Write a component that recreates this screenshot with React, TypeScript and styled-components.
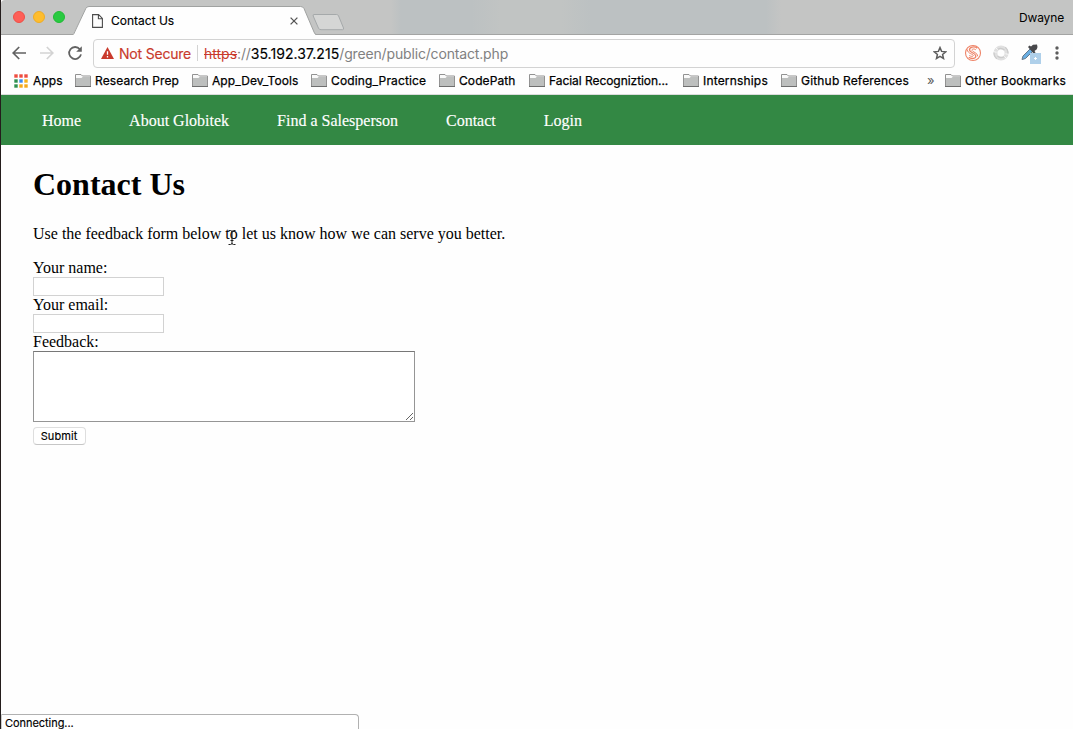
import React from "react";
import styled, { createGlobalStyle } from "styled-components";

const Global = createGlobalStyle`
  * { box-sizing: border-box; }
  html, body { margin: 0; padding: 0; overflow: hidden; }
  body { background: #fdfdfd; }
`;

const ui = `"Inter", "Roboto", sans-serif`;
const serif = `"Liberation Serif", "Times New Roman", serif`;

const Window = styled.div`
  position: relative;
  display: flex;
  flex-direction: column;
  width: 1073px;
  height: 729px;
  background: #fefefe;
  border-left: 1px solid #241d1c;
  overflow: hidden;
  font-family: ${ui};
  color: #000;
`;

const TitleBar = styled.header`
  display: flex;
  flex: none;
  height: 35px;
  background: linear-gradient(90deg, #c4c5c4 0 390px, #bcc1c2 400px 470px, #c1c4c3 500px 560px, #bcc1c2 590px 765px, #c4c5c4 780px);
  border-bottom: 1px solid #a3a4a3;
  border-top-left-radius: 4px;
`;

const Lights = styled.div`
  display: flex;
  gap: 8px;
  width: 72px;
  padding: 11px 0 0 12px;
`;

const Light = styled.span<{ $fill: string; $edge: string }>`
  width: 12px;
  height: 12px;
  border-radius: 50%;
  background: ${(p) => p.$fill};
  border: 1px solid ${(p) => p.$edge};
`;

const Tab = styled.div`
  position: relative;
  display: flex;
  width: 243px;
  height: 35px;
  flex: none;
`;

const TabShape = styled.svg`
  position: absolute;
  inset: 0;
`;

const TabContent = styled.div`
  position: relative;
  display: flex;
  align-items: center;
  width: 100%;
  height: 28px;
  margin-top: 7px;
  padding: 0 18px 0 19px;
`;

const TabTitle = styled.span`
  margin-left: 8px;
  flex: 1;
  font-size: 12px;
  line-height: 16px;
  letter-spacing: 0;
  -webkit-text-stroke: 0.15px #000;
`;

const NewTab = styled.svg`
  margin: 12px 0 0 -6px;
  flex: none;
`;

const User = styled.span`
  margin: 10px 9px 0 auto;
  font-size: 12px;
  line-height: 16px;
  letter-spacing: -0.15px;
`;

const Toolbar = styled.div`
  display: flex;
  align-items: center;
  flex: none;
  height: 33px;
  padding-top: 3px;
`;

const NavButtons = styled.div`
  display: flex;
  gap: 12px;
  width: 92px;
  padding-left: 10px;
`;

const AddressBar = styled.div`
  display: flex;
  align-items: center;
  width: 862px;
  height: 29px;
  padding: 0 7px;
  border: 1px solid #d3d3d3;
  border-radius: 4px;
  font-size: 14px;
  line-height: 20px;
`;

const Warning = styled.span`
  width: 72px;
  margin-left: 5px;
  padding-top: 1px;
  color: #c93a2c;
  white-space: nowrap;
  letter-spacing: -0.2px;
  -webkit-text-stroke: 0.15px #c93a2c;
`;

const Divider = styled.i`
  width: 1px;
  height: 16px;
  margin: 0 6px;
  background: #d3d3d3;
`;

const Url = styled.span`
  flex: 1;
  padding-top: 1px;
  white-space: nowrap;
  color: #818181;
  letter-spacing: -0.16px;
`;

const Scheme = styled.s`
  color: #c93a2c;
  letter-spacing: 0;
`;

const Host = styled.span`
  color: #000;
  letter-spacing: 0.06px;
  -webkit-text-stroke: 0.15px #000;
`;

const Extensions = styled.div`
  display: flex;
  align-items: center;
  gap: 8px;
  padding-left: 8px;
`;

const Kebab = styled.svg`
  margin-left: 6px;
`;

const Bookmarks = styled.nav`
  display: flex;
  flex: none;
  align-items: center;
  height: 27px;
  border-bottom: 1px solid #dcdcdc;
  padding: 0 0 1px 13px;
`;

const Bookmark = styled.span<{ $width: number; $spacing?: number; $gap?: number }>`
  display: flex;
  align-items: center;
  flex: none;
  gap: ${(p) => p.$gap ?? 4}px;
  width: ${(p) => p.$width}px;
  font-size: 12px;
  line-height: 16px;
  letter-spacing: ${(p) => p.$spacing ?? 0}px;
  white-space: nowrap;
  -webkit-text-stroke: 0.25px #000;
`;

const Overflow = styled.span`
  width: 18px;
  color: #5c5c5c;
  font-size: 13px;
  line-height: 14px;
  padding-bottom: 2px;
`;

const SiteNav = styled.nav`
  display: flex;
  align-items: center;
  flex: none;
  gap: 48px;
  height: 50px;
  padding: 2px 41px 0;
  background: #338844;
  font: 16px/18px ${serif};
`;

const NavLink = styled.a`
  color: #fff;
  -webkit-text-stroke: 0.15px #fff;
`;

const Main = styled.main`
  display: flex;
  flex-direction: column;
  align-items: flex-start;
  padding: 21px 32px;
  font: 16px/18px ${serif};
`;

const Heading = styled.h1`
  margin: 0;
  font-size: 32px;
  line-height: 37px;
`;

const Intro = styled.p`
  position: relative;
  margin: 22px 0 16px;
`;

const Caret = styled.svg`
  position: absolute;
  left: 195px;
  top: 5px;
`;

const Form = styled.form`
  display: flex;
  flex-direction: column;
  align-items: flex-start;
`;

const Label = styled.label`
  height: 18px;
`;

const Input = styled.input`
  width: 131px;
  height: 19px;
  padding: 1px;
  border: 1px solid #d2d2d2;
  border-radius: 0;
  background: #fff;
`;

const Area = styled.textarea`
  width: 382px;
  height: 71px;
  border: 1px solid #959595;
  border-top-color: #777;
  border-radius: 0;
  background: #fff;
`;

const Submit = styled.button`
  width: 53px;
  height: 18px;
  margin-top: 5px;
  padding: 0 1px 0 0;
  border: 1px solid #dedede;
  border-bottom-color: #c6c6c6;
  border-radius: 4px;
  background: #fff;
  font: 11px/14px ${ui};
  letter-spacing: 0.08px;
  color: #000;
  -webkit-text-stroke: 0.15px #000;
`;

const Status = styled.div`
  position: absolute;
  left: 0;
  bottom: 0;
  width: 358px;
  height: 15px;
  padding: 1px 0 0 3px;
  border: 1px solid #b1b1b1;
  border-bottom: 0;
  border-left-color: #ccc;
  border-top-right-radius: 4px;
  background: #fff;
  font-size: 11px;
  line-height: 15px;
  letter-spacing: -0.05px;
  -webkit-text-stroke: 0.15px #000;
`;

const Folder = () => (
  <svg width="16" height="13" viewBox="0 0 16 13">
    <path d="M.5 12.5V.5h5.500l1.500 1.500h8v10.500z" fill="#fafafa" stroke="#929292" />
    <path d="M1 4h5.500l1-1H15v9H1z" fill="#bdbfbe" />
    <path d="M0 12.500h16" stroke="#6e6e6e" />
  </svg>
);

const appColors = ["#ee4d3f", "#ee4d3f", "#ee4d3f", "#2f9150", "#3c8af0", "#f5b21a", "#2f9150", "#f5a91a", "#f5a91a"];

const AppsIcon = () => (
  <svg width="14" height="14" viewBox="0 0 14 14">
    {appColors.map((c, i) => (
      <rect key={i} x={(i % 3) * 5 + 0.3} y={Math.floor(i / 3) * 5 + 0.3} width="3.400" height="3.400" fill={c} />
    ))}
  </svg>
);

const bookmarks = [
  { name: "Research Prep", width: 117, spacing: 0.1 },
  { name: "App_Dev_Tools", width: 119, spacing: 0.08 },
  { name: "Coding_Practice", width: 128, spacing: 0.15 },
  { name: "CodePath", width: 90, spacing: 0.1 },
  { name: "Facial Recogniztion...", width: 154, spacing: -0.05 },
  { name: "Internships", width: 98, spacing: 0.18 },
  { name: "Github References", width: 146, spacing: 0.18 },
];

export default function App() {
  return (
    <Window>
      <Global />
      <TitleBar>
        <Lights>
          <Light $fill="#fe5f57" $edge="#ed5047" />
          <Light $fill="#febd2e" $edge="#eeac25" />
          <Light $fill="#29ca41" $edge="#20bb35" />
        </Lights>
        <Tab>
          <TabShape width="243" height="35">
            <path d="M0 35L12.8 8.5Q13.8 6.5 16 6.5H227.5Q230 6.5 231 8.5L241 32Q242 34.5 243 35Z" fill="#fefefe" />
            <path d="M.5 34.5L12.8 8.5Q13.8 6.5 16 6.5H227.5Q230 6.5 231 8.5L241 32Q242 34.5 243 34.5" fill="none" stroke="#a0a2a1" />
          </TabShape>
          <TabContent>
            <svg width="11" height="14" viewBox="0 0 11 14" fill="none" stroke="#4c4c4c" strokeWidth="1.1">
              <path d="M.6.6h6l3.8 3.8v9H.6zM6.4.8v3.9h3.8" />
            </svg>
            <TabTitle>Contact Us</TabTitle>
            <svg width="8" height="8" viewBox="0 0 8 8" stroke="#555" strokeWidth="1.3">
              <path d="M.6.6l6.8 6.8M7.4.6L.6 7.4" />
            </svg>
          </TabContent>
        </Tab>
        <NewTab width="36" height="20" viewBox="0 0 36 20">
          <path d="M4 2.5h22.5q1.4 0 2 1.3L33.500 16q.4 1.700-1 1.700H11q-1.800 0-2.500-1.500L3.200 4q-.5-1.500.8-1.500z" fill="#d5d6d5" stroke="#a5a9aa" />
        </NewTab>
        <User>Dwayne</User>
      </TitleBar>

      <Toolbar>
        <NavButtons>
          <svg width="16" height="16" viewBox="0 0 16 16" fill="none" stroke="#626262" strokeWidth="1.7">
            <path d="M15 8H2.5M8.2 2L2.2 8l6 6" />
          </svg>
          <svg width="16" height="16" viewBox="0 0 16 16" fill="none" stroke="#d3d3d3" strokeWidth="1.7">
            <path d="M1 8h12.5M7.8 2l6 6-6 6" />
          </svg>
          <svg width="16" height="16" viewBox="0 0 16 16" fill="none" stroke="#626262" strokeWidth="1.8">
            <path d="M12.8 4.2A6 6 0 1 0 14 9.4" />
            <path d="M14.8 1.2v5.6H9.2z" fill="#626262" stroke="none" />
          </svg>
        </NavButtons>
        <AddressBar>
          <svg width="13" height="12" viewBox="0 0 13 12">
            <path d="M6.5 0L13 12H0z" fill="#c93a2c" />
            <path d="M6.5 4.2v3.6M6.5 9v1.4" stroke="#fff" strokeWidth="1.3" />
          </svg>
          <Warning>Not Secure</Warning>
          <Divider />
          <Url>
            <Scheme>https</Scheme>://<Host>35.192.37.215</Host>/green/public/contact.php
          </Url>
          <svg width="14" height="14" viewBox="0 0 14 14" fill="none" stroke="#5e5e5e" strokeWidth="1.5">
            <path d="M7 1.600l1.600 3.800 4.100.4-3.100 2.700.9 4L7 10.400l-3.500 2.100.9-4L1.300 5.800l4.100-.4z" />
          </svg>
        </AddressBar>
        <Extensions>
          <svg width="20" height="20" viewBox="0 0 20 20" fill="none" stroke="#ee8468">
            <circle cx="10" cy="10" r="7.500" strokeWidth="1.100" />
            <path d="M14.300 5.200C11.500 2.800 6 4 6.500 7.200c.4 2.500 5.800 2.600 6.300 5.600.4 2.600-4 3.700-7 1.400" strokeWidth="1.300" />
            <path d="M12.800 6.800C11 5.400 8.600 6 9 7.400c.5 1.700 5.700 2.200 5.800 6M4.200 6.400c.6 4.600 5.700 4.400 6.100 6 .3 1.200-2.300 1.400-4 0" strokeWidth="1" />
          </svg>
          <svg width="20" height="20" viewBox="0 0 20 20" fill="none">
            <circle cx="10" cy="10" r="5.600" stroke="#e0e0e0" strokeWidth="4" />
            <path d="M4.200 4.200l2.600 2.600M15.800 15.800l-2.600-2.600M2.600 8.800l3 .4M17.400 11.200l-3-.4" stroke="#fefefe" strokeWidth=".8" />
            <path d="M6.800 6.300Q10 4 13.500 7M13.200 13.700Q10 16 6.500 13M14 4.200q3 2 3 6.300M6 15.800q-3-2-3-6.300" stroke="#cccccc" strokeWidth="1.300" />
          </svg>
          <svg width="22" height="22" viewBox="0 0 22 22">
            <path d="M3 17.500l1-3.500 7-7 2.500 2.500-7 7z" fill="#69aee2" stroke="#667889" />
            <path d="M9 5l1.500-1.500L12 4.500l2-1.800 4-.2.500 2.500-.7 2.300-2.300 1.700 1 1.500-1.500 1.500z" fill="#48484b" />
            <rect x="11" y="11" width="11" height="11" fill="#afd0ea" />
            <path d="M16.500 15v3M15 16.500h3" stroke="#fff" />
          </svg>
          <Kebab width="4" height="14" viewBox="0 0 4 14" fill="#5c5c5c">
            <circle cx="2" cy="2" r="1.700" />
            <circle cx="2" cy="7" r="1.700" />
            <circle cx="2" cy="12" r="1.700" />
          </Kebab>
        </Extensions>
      </Toolbar>

      <Bookmarks>
        <Bookmark $width={61} $gap={5} $spacing={0.1}>
          <AppsIcon />
          Apps
        </Bookmark>
        {bookmarks.map((b) => (
          <Bookmark key={b.name} $width={b.width} $spacing={b.spacing}>
            <Folder />
            {b.name}
          </Bookmark>
        ))}
        <Overflow>»</Overflow>
        <Bookmark $width={122} $spacing={0.14}>
          <Folder />
          Other Bookmarks
        </Bookmark>
      </Bookmarks>

      <SiteNav>
        <NavLink>Home</NavLink>
        <NavLink>About Globitek</NavLink>
        <NavLink>Find a Salesperson</NavLink>
        <NavLink>Contact</NavLink>
        <NavLink>Login</NavLink>
      </SiteNav>

      <Main>
        <Heading>Contact Us</Heading>
        <Intro>
          Use the feedback form below to let us know how we can serve you better.
          <Caret width="8" height="15" viewBox="0 0 8 15" fill="none" stroke="#222">
            <path d="M.5.5h2q1.500 0 1.500 1.500v11q0 1.500-1.500 1.500h-2M7.500.5h-2Q4 .5 4 2M7.500 14.500h-2Q4 14.500 4 13M2.500 10.500h3" />
          </Caret>
        </Intro>
        <Form>
          <Label htmlFor="name">Your name:</Label>
          <Input id="name" />
          <Label htmlFor="email">Your email:</Label>
          <Input id="email" />
          <Label htmlFor="feedback">Feedback:</Label>
          <Area id="feedback" />
          <Submit type="button">Submit</Submit>
        </Form>
      </Main>
      <Status>Connecting...</Status>
    </Window>
  );
}
